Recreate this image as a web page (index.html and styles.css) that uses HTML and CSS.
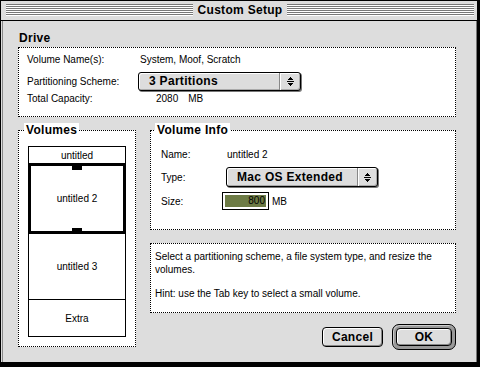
FILE: index.html
```html
<!DOCTYPE html>
<html lang="en">
<head>
  <meta charset="UTF-8" />
  <title>Custom Setup</title>
  <link rel="stylesheet" href="styles.css">
</head>
<body>
  <div class="window">
    <div class="titlebar">
      <span class="stripes"></span>
      <span class="title">Custom Setup</span>
      <span class="stripes"></span>
    </div>

    <div class="content">
      <div class="heading">Drive</div>
      <div class="box drive">
        <div class="field"><span class="label">Volume Name(s):</span><span>System, Moof, Scratch</span></div>
        <div class="field popup-row">
          <span class="label">Partitioning Scheme:</span>
          <div class="popup scheme">
            <span class="popup-text">3 Partitions</span>
            <span class="popup-arrow">
              <svg width="7" height="9" viewBox="0 0 7 9" shape-rendering="crispEdges">
                <rect x="3" y="0" width="1" height="1"/><rect x="2" y="1" width="3" height="1"/><rect x="1" y="2" width="5" height="1"/>
                <rect x="0" y="4" width="7" height="1"/>
                <rect x="1" y="6" width="5" height="1"/><rect x="2" y="7" width="3" height="1"/><rect x="3" y="8" width="1" height="1"/>
              </svg>
            </span>
          </div>
        </div>
        <div class="field"><span class="label">Total Capacity:</span><span class="capacity">2080</span><span>MB</span></div>
      </div>

      <div class="columns">
        <div class="box volumes">
          <div class="group-title">Volumes</div>
          <div class="vol-list">
            <div class="vol first">untitled</div>
            <div class="vol selected">untitled 2</div>
            <div class="vol third">untitled 3</div>
            <div class="vol extra">Extra</div>
          </div>
        </div>

        <div class="right">
          <div class="box info">
            <div class="group-title">Volume Info</div>
            <div class="field name-row"><span class="label">Name:</span><span>untitled 2</span></div>
            <div class="field type-row">
              <span class="label">Type:</span>
              <div class="popup fstype">
                <span class="popup-text">Mac OS Extended</span>
                <span class="popup-arrow">
                  <svg width="7" height="9" viewBox="0 0 7 9" shape-rendering="crispEdges">
                    <rect x="3" y="0" width="1" height="1"/><rect x="2" y="1" width="3" height="1"/><rect x="1" y="2" width="5" height="1"/>
                    <rect x="0" y="4" width="7" height="1"/>
                    <rect x="1" y="6" width="5" height="1"/><rect x="2" y="7" width="3" height="1"/><rect x="3" y="8" width="1" height="1"/>
                  </svg>
                </span>
              </div>
            </div>
            <div class="field size-row">
              <span class="label">Size:</span>
              <div class="size-field"><span class="size-sel">800</span></div>
              <span class="unit">MB</span>
            </div>
          </div>

          <div class="box help">
            <p>Select a partitioning scheme, a file system type, and resize the volumes.</p>
            <p class="hint">Hint: use the Tab key to select a small volume.</p>
          </div>

          <div class="buttons">
            <button class="btn cancel">Cancel</button>
            <div class="default-ring"><button class="btn ok">OK</button></div>
          </div>
        </div>
      </div>
    </div>
  </div>
</body>
</html>
```

FILE: styles.css
```css
* {
  box-sizing: border-box;
}

body {
  margin: 0;
  padding: 0;
  background: #000;
  font-family: "Liberation Sans", Arial, sans-serif;
  font-size: 10px;
  color: #000;
}

.window {
  width: 480px;
  height: 367px;
  background: #dddddd;
  border-style: solid;
  border-color: #000;
  border-width: 1px 3px 5px 1px;
  display: flex;
  flex-direction: column;
}

.titlebar {
  display: flex;
  align-items: flex-start;
  gap: 5px;
  height: 20px;
  padding: 3px 3px 0 5px;
  background: #dddddd;
  border-bottom: 1px solid #000;
}

.stripes {
  flex: 1;
  height: 12px;
  background: repeating-linear-gradient(to bottom, #777 0 1px, #fff 1px 2px);
}

.title {
  font-size: 12px;
  font-weight: bold;
  letter-spacing: 0.3px;
  line-height: 13px;
}

.content {
  flex: 1;
  margin-left: 1px;
  border-left: 1px solid #888;
  border-right: 1px solid #777;
  padding: 9px 20px 0 15px;
}

.heading {
  font-size: 12px;
  font-weight: bold;
  letter-spacing: 0.3px;
  line-height: 16px;
  height: 16px;
  padding-left: 1px;
  margin-bottom: 1px;
}

.box {
  background: #fff;
  border: 1px dotted #000;
}

.field {
  display: flex;
  align-items: center;
  height: 14px;
}

.label {
  flex: none;
}

/* drive box */
.drive {
  height: 70px;
  padding: 4px 8px 0;
}

.drive .label {
  width: 113px;
}

.popup-row {
  height: 19px;
  margin-top: 6px;
}

.capacity {
  margin-left: 16px;
  margin-right: 10px;
}

.popup {
  display: flex;
  height: 19px;
  background: #dddddd;
  border: 1px solid #000;
  border-radius: 3px;
  box-shadow: 1px 1px 0 #777, inset 1px 1px 0 #fff, inset -1px -1px 0 #aaa;
}

.popup-text {
  flex: 1;
  padding-left: 10px;
  font-size: 12px;
  font-weight: bold;
  letter-spacing: 0.3px;
  line-height: 17px;
}

.popup-arrow {
  width: 21px;
  display: flex;
  align-items: center;
  justify-content: center;
  border-left: 1px solid #888;
  box-shadow: inset 1px 0 0 #fff;
}

.scheme {
  width: 163px;
  margin-left: -2px;
}

/* two columns */
.columns {
  display: flex;
  align-items: flex-start;
  gap: 14px;
  margin-top: 13px;
}

.group-title {
  width: fit-content;
  height: 14px;
  margin-top: -8px;
  padding: 0 2px;
  background: #fff;
  font-size: 12px;
  font-weight: bold;
  letter-spacing: 0.3px;
  line-height: 14px;
}

.volumes {
  width: 118px;
  height: 217px;
  padding: 0 9px;
}

.volumes .group-title {
  margin-left: -4px;
}

.vol-list {
  width: 98px;
  margin-top: 9px;
  border: 1px solid #000;
}

.vol {
  display: flex;
  align-items: center;
  justify-content: center;
}

.vol.first {
  height: 16px;
}

.vol.selected {
  position: relative;
  height: 71px;
  margin: 0 -1px;
  border: 3px solid #000;
}

.vol.selected::before,
.vol.selected::after {
  content: "";
  position: absolute;
  left: 41px;
  width: 10px;
  background: #000;
}

.vol.selected::before {
  top: -3px;
  height: 7px;
}

.vol.selected::after {
  bottom: -3px;
  height: 6px;
}

.vol.third {
  height: 65px;
}

.vol.extra {
  height: 37px;
  border-top: 1px solid #000;
}

.right {
  width: 306px;
}

/* volume info */
.info {
  height: 100px;
  padding: 0 10px;
}

.info .group-title {
  margin-left: -6px;
  margin-bottom: 10px;
}

.info .label {
  width: 66px;
}

.type-row {
  height: 20px;
  margin-top: 6px;
}

.fstype {
  width: 152px;
  height: 20px;
  margin-left: -1px;
}

.fstype .popup-text {
  line-height: 18px;
}

.fstype .popup-arrow {
  width: 20px;
}

.size-row {
  height: 18px;
  margin-top: 5px;
}

.size-field {
  width: 47px;
  height: 18px;
  margin-left: -5px;
  padding: 2px;
  background: #fff;
  border: 1px solid #000;
}

.size-sel {
  display: block;
  height: 100%;
  background: #6d7b45;
  text-align: right;
  padding-right: 1px;
  line-height: 12px;
}

.unit {
  margin-left: 3px;
}

/* help text */
.help {
  height: 70px;
  margin-top: 13px;
  padding: 6px 4px 0 4px;
}

.help p {
  margin: 0;
  line-height: 13px;
}

.help .hint {
  margin-top: 11px;
}

/* buttons */
.buttons {
  display: flex;
  justify-content: flex-end;
  align-items: center;
  gap: 9px;
  margin-top: 11px;
}

.btn {
  font-family: "Liberation Sans", Arial, sans-serif;
  font-size: 12px;
  font-weight: bold;
  letter-spacing: 0.3px;
  color: #000;
  padding: 0;
  background: #dddddd;
  border: 1px solid #000;
  border-radius: 4px;
  box-shadow: inset 1px 1px 0 #fff, inset -1px -1px 0 #888;
}

.cancel {
  width: 61px;
  height: 20px;
}

.default-ring {
  width: 64px;
  height: 26px;
  padding: 3px;
  background: #999;
  border: 1px solid #000;
  border-radius: 7px;
  box-shadow: inset 1px 1px 0 #ccc;
}

.ok {
  width: 56px;
  height: 18px;
  display: block;
}
```
